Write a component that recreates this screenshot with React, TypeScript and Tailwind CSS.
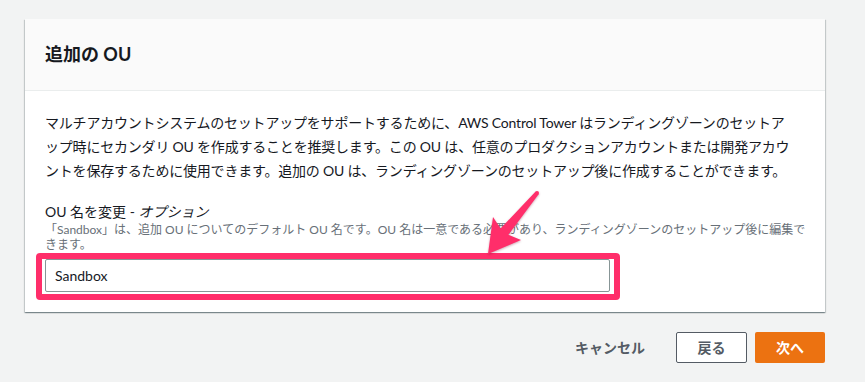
import React from 'react';

const font = { fontFamily: 'Lato, "Noto Sans CJK JP", sans-serif' };

function Arrow() {
  // skitch-style pointer from upper right down to the highlighted field
  return (
    <svg
      className="pointer-events-none absolute left-0 top-0"
      width={865}
      height={382}
      viewBox="0 0 865 382"
    >
      <g style={{ filter: 'drop-shadow(0px 1px 1px rgba(120,0,40,0.35))' }}>
        <polygon
          points="535.4,191.7 500.6,228.5 493,217 488,254 521,240 508.4,234.7 538.6,194.3"
          fill="#ff2e6a"
        />
        <circle cx={537} cy={193} r={2} fill="#ff2e6a" />
      </g>
    </svg>
  );
}

export default function App() {
  return (
    <div className="relative h-[382px] w-[865px] overflow-hidden bg-[#f2f3f3]" style={font}>
      <div className="px-[25px] pt-[19px]">
        <div className="w-[800px] bg-white shadow-[0_1px_1px_0_rgba(0,28,36,0.3),1px_1px_1px_0_rgba(0,28,36,0.15),-1px_1px_1px_0_rgba(0,28,36,0.15)]">
          <div className="border-b border-[#eaeded] bg-[#fafafa] px-5 py-[23px]">
            <h2 className="text-[18px] font-bold leading-[25px] text-[#16191f]">追加の OU</h2>
          </div>
          <div className="px-5 pb-5 pt-5">
            <p className="whitespace-nowrap text-[14px] leading-[24px] tracking-[-0.2px] text-[#16191f]">
              マルチアカウントシステムのセットアップをサポートするために、AWS Control Tower はランディングゾーンのセットア
              <br />
              ップ時にセカンダリ OU を作成することを推奨します。この OU は、任意のプロダクションアカウントまたは開発アカウ
              <br />
              ントを保存するために使用できます。追加の OU は、ランディングゾーンのセットアップ後に作成することができます。
            </p>
            <div className="mt-[19px]">
              <div className="text-[14px] leading-[20px] text-[#16191f]">
                OU 名を変更 - <i>オプション</i>
              </div>
              <div className="whitespace-nowrap text-[12px] leading-[15px] text-[#687078]">
                「Sandbox」は、追加 OU についてのデフォルト OU 名です。OU 名は一意である必要があり、ランディングゾーンのセットアップ後に編集で
                <br />
                きます。
              </div>
              <div className="relative mt-[7px] w-[565px]">
                <div className="absolute -bottom-[8px] -left-[9px] -right-[10px] -top-[6px] rounded-[4px] border-[6px] border-[#ff2e6a] bg-white" />
                <div className="relative flex h-[33px] items-center rounded-[2px] border border-[#879596] bg-white px-[9px] text-[14px] text-[#16191f]">
                  Sandbox
                </div>
              </div>
            </div>
          </div>
        </div>
        <div className="mt-5 flex w-[800px] items-center justify-end">
          <button className="mr-[31px] text-[14px] font-bold text-[#545b64]">キャンセル</button>
          <button className="mr-2 h-[31px] w-[71px] rounded-[2px] border border-[#545b64] bg-white text-[14px] font-bold text-[#545b64]">
            戻る
          </button>
          <button className="h-[31px] w-[70px] rounded-[2px] bg-[#ec7211] text-[14px] font-bold text-white">次へ</button>
        </div>
      </div>
      <Arrow />
    </div>
  );
}
